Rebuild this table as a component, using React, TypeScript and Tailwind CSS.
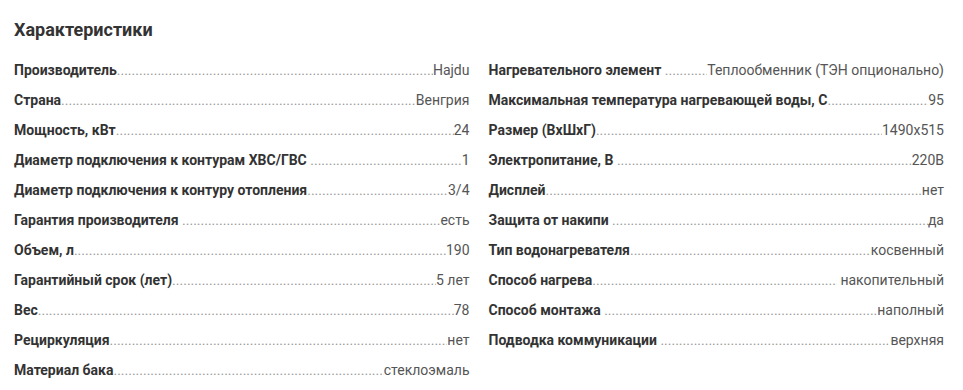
const left: [string, string][] = [
  ["Производитель", "Hajdu"],
  ["Страна", "Венгрия"],
  ["Мощность, кВт", "24"],
  ["Диаметр подключения к контурам ХВС/ГВС ", "1"],
  ["Диаметр подключения к контуру отопления", "3/4"],
  ["Гарантия производителя ", "есть"],
  ["Объем, л", "190"],
  ["Гарантийный срок (лет)", "5 лет"],
  ["Вес", "78"],
  ["Рециркуляция", "нет"],
  ["Материал бака", "стеклоэмаль"],
]

const right: [string, string][] = [
  ["Нагревательного элемент ", "Теплообменник (ТЭН опционально)"],
  ["Максимальная температура нагревающей воды, С", "95"],
  ["Размер (ВхШхГ)", "1490x515"],
  ["Электропитание, В ", "220В"],
  ["Дисплей", "нет"],
  ["Защита от накипи ", "да"],
  ["Тип водонагревателя", "косвенный"],
  ["Способ нагрева", " накопительный"],
  ["Способ монтажа ", "наполный"],
  ["Подводка коммуникации ", "верхняя"],
]

const dots = ".".repeat(200)

const Row = ({ label, value }: { label: string; value: string }) => {
  return (
    <li className="flex items-baseline h-[30px] leading-[30px] text-[14px]">
      <span className="font-bold text-[#333] whitespace-pre shrink-0">{label}</span>
      <span className="flex-1 overflow-hidden whitespace-nowrap text-[#999] min-w-0">{dots}</span>
      <span className="text-[#555] whitespace-pre shrink-0">{value}</span>
    </li>
  )
}

export default function App() {
  return (
    <div className="w-[963px] h-[390px] bg-white pl-[14px] pr-[19px] pt-[18px] font-['Roboto',sans-serif]">
      <h2 className="text-[18px] leading-[24px] font-bold text-[#333]">Характеристики</h2>
      <div className="grid grid-cols-2 gap-x-[19px] mt-[13px]">
        <ul>
          {left.map(([l, v]) => (
            <Row key={l} label={l} value={v} />
          ))}
        </ul>
        <ul>
          {right.map(([l, v]) => (
            <Row key={l} label={l} value={v} />
          ))}
        </ul>
      </div>
    </div>
  )
}
